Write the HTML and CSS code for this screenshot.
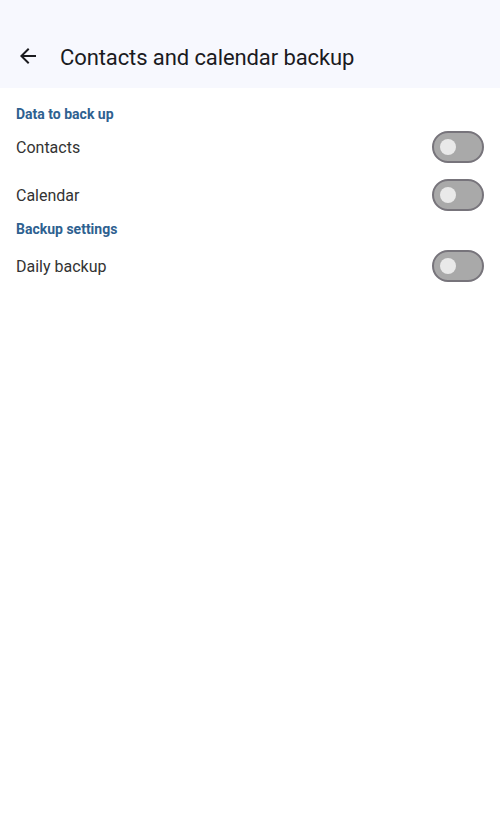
FILE: index.html
```html
<!DOCTYPE html>
<html>
<head>
<meta charset="utf-8">
<link rel="stylesheet" href="styles.css">
</head>
<body>
<header class="appbar">
  <button class="back" aria-label="Back">
    <svg width="24" height="24" viewBox="0 0 24 24"><path d="M20 11H7.83l5.59-5.59L12 4l-8 8 8 8 1.41-1.41L7.83 13H20v-2z" fill="#1b1b1f"/></svg>
  </button>
  <h1 class="title">Contacts and calendar backup</h1>
</header>
<main>
  <section class="section first">
    <h2 class="section-title">Data to back up</h2>
    <div class="row"><span class="label">Contacts</span><span class="switch"><span class="thumb"></span></span></div>
    <div class="row"><span class="label">Calendar</span><span class="switch"><span class="thumb"></span></span></div>
  </section>
  <section class="section second">
    <h2 class="section-title">Backup settings</h2>
    <div class="row"><span class="label">Daily backup</span><span class="switch"><span class="thumb"></span></span></div>
  </section>
</main>
</body>
</html>
```
FILE: styles.css
```css
html, body { margin: 0; padding: 0; background: #fff; }
body { font-family: Roboto, "Noto Sans", sans-serif; width: 500px; }
.appbar {
  height: 88px;
  background: #f7f8fe;
  display: flex;
  align-items: flex-end;
  box-sizing: border-box;
  padding: 0 0 8px 16px;
}
.back {
  width: 24px; height: 24px; padding: 0; margin: 0 20px 12px 0;
  border: 0; background: none; display: flex;
}
.title {
  margin: 0 0 8px 0;
  font-size: 22px;
  font-weight: 400;
  line-height: 28px;
  letter-spacing: -0.1px;
  color: #1b1b1f;
}
.section-title {
  margin: 0;
  padding: 0 16px;
  font-size: 14px;
  font-weight: 700;
  line-height: 20px;
  color: #2e6190;
}
.first { padding-top: 16px; }
.first .section-title { margin-bottom: -1px; }
.second .section-title { margin-bottom: 3px; }
.row {
  height: 48px;
  display: flex;
  align-items: center;
  justify-content: space-between;
  padding: 0 16px;
}
.label { font-size: 16px; color: #333; }
.switch {
  width: 52px; height: 32px; box-sizing: border-box;
  border: 2px solid #77747b;
  background: #a9a9a9;
  border-radius: 16px;
  display: flex; align-items: center;
  padding-left: 6px;
}
.thumb { width: 16px; height: 16px; border-radius: 50%; background: #e9e9e9; }
```
